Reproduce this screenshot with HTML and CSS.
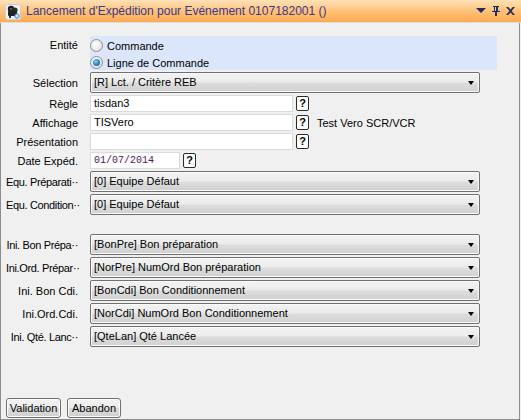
FILE: index.html
```html
<!DOCTYPE html>
<html lang="fr">
<head>
<meta charset="utf-8">
<title>Lancement d'Expédition</title>
<link rel="stylesheet" href="styles.css">
</head>
<body>
<div class="window">
  <div class="titlebar">
    <svg class="app-icon" width="16" height="16" viewBox="0 0 16 16">
      <rect x="0.5" y="0.5" width="15" height="15" rx="2" fill="#eef1f4" stroke="#c9ced6"/>
      <circle cx="6" cy="5" r="3.2" fill="#1b1b1b"/>
      <circle cx="10" cy="6" r="2.6" fill="#2a2a2a"/>
      <rect x="3" y="7" width="9" height="5" rx="1" fill="#222"/>
      <rect x="4" y="12" width="2" height="2" fill="#333"/>
      <circle cx="12" cy="12" r="2.2" fill="#cfe6fb" stroke="#2f7fd0" stroke-width="1"/>
      <circle cx="6" cy="5" r="1" fill="#777"/>
    </svg>
    <span class="title">Lancement d'Expédition pour Evénement 0107182001 ()</span>
    <div class="title-tools">
      <svg width="10" height="6" viewBox="0 0 10 6"><path d="M0 0h10L5 5z" fill="#1f2d5c"/></svg>
      <svg width="8" height="10" viewBox="0 0 8 10"><path d="M1 0h6v1H6v4h2v1H0V5h2V1H1zM3 1v4h1V1z" fill="#1f2d5c"/><rect x="3" y="6" width="2" height="4" fill="#1f2d5c"/></svg>
      <svg width="9" height="8" viewBox="0 0 9 8"><path d="M0 0h2.2L4.5 2.6 6.8 0H9L5.6 4 9 8H6.8L4.5 5.4 2.2 8H0l3.4-4z" fill="#1f2d5c"/></svg>
    </div>
  </div>

  <div class="content">
    <div class="form">
      <div class="label label-top">Entité</div>
      <div class="radio-group">
        <label class="radio"><span class="radio-dot"></span>Commande</label>
        <label class="radio"><span class="radio-dot checked"></span>Ligne de Commande</label>
      </div>

      <div class="label">Sélection</div>
      <div class="combo">[R] Lct. / Critère REB<span class="arrow"></span></div>

      <div class="label">Règle</div>
      <div class="field-row"><div class="textbox">tisdan3</div><span class="help">?</span></div>

      <div class="label">Affichage</div>
      <div class="field-row"><div class="textbox">TISVero</div><span class="help">?</span><span class="note">Test Vero SCR/VCR</span></div>

      <div class="label">Présentation</div>
      <div class="field-row"><div class="textbox"></div><span class="help">?</span></div>

      <div class="label">Date Expéd.</div>
      <div class="field-row"><div class="textbox date">01/07/2014</div><span class="help">?</span></div>

      <div class="label label-tight">Equ. Préparati··</div>
      <div class="combo">[0] Equipe Défaut<span class="arrow"></span></div>

      <div class="label label-tight">Equ. Condition··</div>
      <div class="combo">[0] Equipe Défaut<span class="arrow"></span></div>

      <div class="spacer"></div>

      <div class="label label-tight">Ini. Bon Prépa··</div>
      <div class="combo">[BonPre] Bon préparation<span class="arrow"></span></div>

      <div class="label label-tight">Ini.Ord. Prépar··</div>
      <div class="combo">[NorPre] NumOrd Bon préparation<span class="arrow"></span></div>

      <div class="label">Ini. Bon Cdi.</div>
      <div class="combo">[BonCdi] Bon Conditionnement<span class="arrow"></span></div>

      <div class="label">Ini.Ord.Cdi.</div>
      <div class="combo">[NorCdi] NumOrd Bon Conditionnement<span class="arrow"></span></div>

      <div class="label label-tight">Ini. Qté. Lanc··</div>
      <div class="combo">[QteLan] Qté Lancée<span class="arrow"></span></div>
    </div>

    <div class="footer">
      <button class="btn btn-validate">Validation</button>
      <button class="btn btn-cancel">Abandon</button>
    </div>
  </div>
</div>
</body>
</html>
```
FILE: styles.css
```css
html, body {
  margin: 0;
  padding: 0;
  width: 521px;
  height: 420px;
  overflow: hidden;
  background: #f0f0f0;
  font-family: "Liberation Sans", Arial, sans-serif;
  font-size: 11px;
  color: #000;
}

.window {
  display: flex;
  flex-direction: column;
  width: 521px;
  height: 420px;
}

/* caption */
.titlebar {
  height: 22px;
  flex: none;
  display: flex;
  align-items: center;
  padding-left: 5px;
  border-bottom: 1px solid #dedede;
  background: linear-gradient(#fde2b8 0%, #ffc47f 45%, #ffa94e 100%);
}

.app-icon {
  flex: none;
  margin-top: 1px;
}

.title {
  margin-left: 5px;
  font-size: 12px;
  color: #353b8e;
  white-space: nowrap;
}

.title-tools {
  margin-left: auto;
  display: flex;
  align-items: center;
  gap: 6px;
  padding-right: 6px;
}

/* body of the dialog */
.content {
  flex: 1;
  display: flex;
  flex-direction: column;
  border: 1px solid #8c8c8c;
  border-top: none;
  margin-right: 1px;
  padding: 13px 0 1px 0;
}

.form {
  display: grid;
  grid-template-columns: 77px 390px;
  column-gap: 12px;
  row-gap: 2px;
  align-items: center;
}

.label {
  text-align: right;
  white-space: nowrap;
}

.label-tight {
  letter-spacing: -0.35px;
  padding-left: 5px;
}

.label-top {
  align-self: start;
  padding-top: 3px;
}

.radio-group {
  width: 407px;
  height: 34px;
  box-sizing: border-box;
  background: #dce6fb;
  padding-top: 3px;
  display: flex;
  flex-direction: column;
  gap: 4px;
}

.radio {
  display: flex;
  align-items: center;
  height: 13px;
  gap: 4px;
}

.radio-dot {
  width: 11px;
  height: 11px;
  border-radius: 50%;
  border: 1px solid #8e8f8f;
  background: radial-gradient(circle at 40% 40%, #ffffff 0%, #e8e8e8 60%, #d2d2d2 100%);
  position: relative;
  flex: none;
}

.radio-dot.checked::after {
  content: "";
  position: absolute;
  left: 2px;
  top: 2px;
  width: 7px;
  height: 7px;
  border-radius: 50%;
  background: radial-gradient(circle at 40% 35%, #8fd0ff 0%, #2a86cf 50%, #0f4f8f 100%);
}

/* drop-down lists */
.combo {
  position: relative;
  height: 21px;
  box-sizing: border-box;
  border: 1px solid #707070;
  border-radius: 2px;
  background: linear-gradient(#f3f3f3 0%, #ebebeb 48%, #dddddd 52%, #d0d0d0 100%);
  padding-left: 3px;
  line-height: 19px;
  white-space: nowrap;
  box-shadow: inset 0 0 0 1px #fafafa;
}

.arrow {
  position: absolute;
  right: 5px;
  top: 8px;
  width: 0;
  height: 0;
  border-left: 3.5px solid transparent;
  border-right: 3.5px solid transparent;
  border-top: 4px solid #000;
}

/* text fields */
.field-row {
  display: flex;
  align-items: center;
  height: 17px;
}

.textbox {
  width: 203px;
  height: 17px;
  box-sizing: border-box;
  background: #fff;
  border: 1px solid #d9dbe1;
  padding-left: 3px;
  line-height: 15px;
  white-space: nowrap;
}

.textbox.date {
  width: 90px;
  font-family: "Liberation Mono", "Courier New", monospace;
  font-size: 10px;
  color: #4e1860;
}

.help {
  margin-left: 3px;
  width: 13px;
  height: 15px;
  box-sizing: border-box;
  border: 1px solid #2a2a2a;
  border-radius: 2px;
  background: #fff;
  font-weight: bold;
  font-size: 11px;
  line-height: 13px;
  text-align: center;
}

.note {
  margin-left: 8px;
}

.spacer {
  grid-column: 1 / -1;
  height: 15px;
}

/* buttons */
.footer {
  margin-top: auto;
  display: flex;
  gap: 6px;
  padding-left: 5px;
}

.btn {
  height: 20px;
  box-sizing: border-box;
  border: 1px solid #707070;
  border-radius: 3px;
  background: linear-gradient(#f2f2f2 0%, #ebebeb 48%, #dddddd 52%, #cfcfcf 100%);
  font-family: "Liberation Sans", Arial, sans-serif;
  font-size: 11px;
  color: #000;
  padding: 0;
  box-shadow: inset 0 0 0 1px #fbfbfb;
}

.btn-validate { width: 55px; }
.btn-cancel { width: 54px; }
```
